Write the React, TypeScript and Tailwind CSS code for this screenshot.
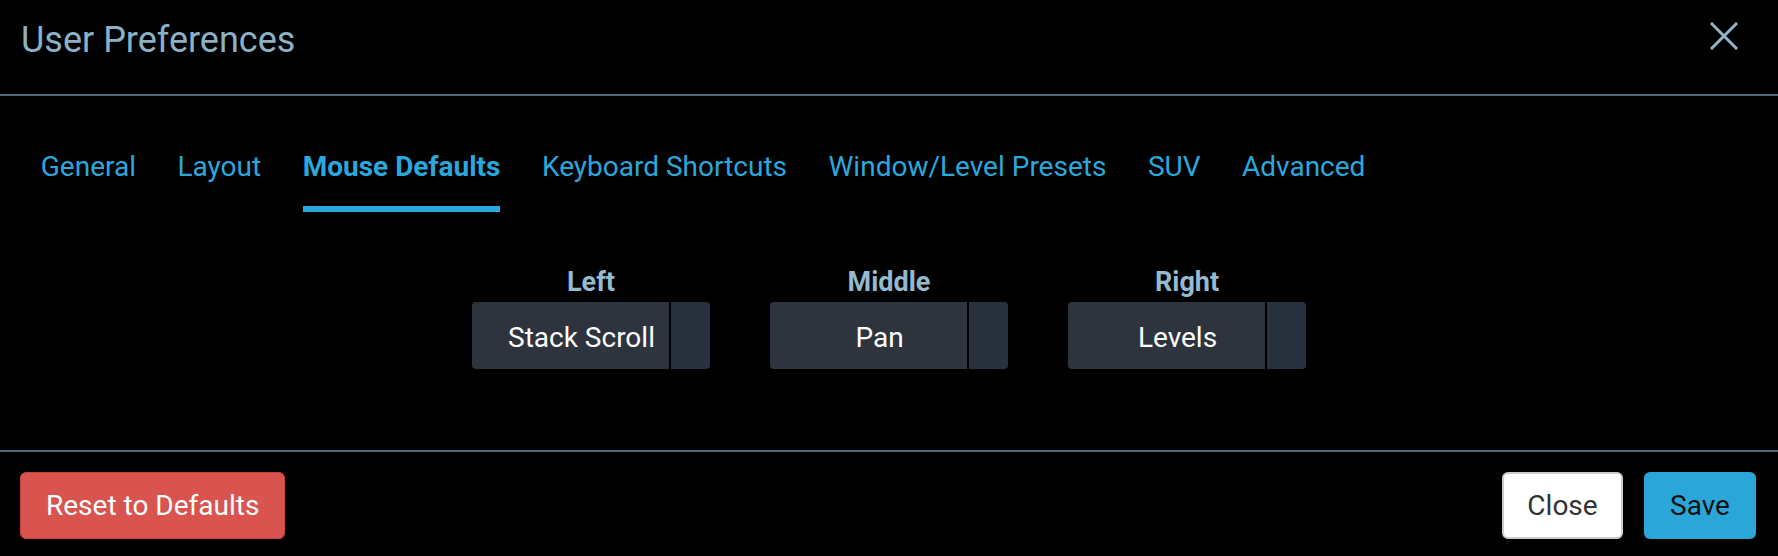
import { useState } from 'react';

const tabs = [
  'General',
  'Layout',
  'Mouse Defaults',
  'Keyboard Shortcuts',
  'Window/Level Presets',
  'SUV',
  'Advanced',
];

const buttons = [
  { label: 'Left', value: 'Stack Scroll' },
  { label: 'Middle', value: 'Pan' },
  { label: 'Right', value: 'Levels' },
];

function MouseSelect({ label, value }: { label: string; value: string }) {
  return (
    <div className="flex flex-col items-center">
      <div className="text-[27px] leading-[30px] font-bold text-[#94bad0]">{label}</div>
      <div className="mt-[5px] flex h-[67px] w-[238px] overflow-hidden rounded-[4px]">
        <div className="flex flex-1 items-center justify-center bg-[#2e343e] pl-[22px] pt-[4px] text-[28px] leading-none text-white">
          {value}
        </div>
        <div className="w-[2px] bg-black" />
        <div className="w-[39px] bg-[#28323e]" />
      </div>
    </div>
  );
}

export default function App() {
  const [active, setActive] = useState('Mouse Defaults');

  return (
    <div className="flex h-[556px] w-full flex-col bg-black font-['Roboto',sans-serif]">
      {/* header */}
      <div className="flex h-[96px] items-start justify-between border-b-2 border-[#4f6878] pl-[21px] pr-[40px] pt-[18px]">
        <h1 className="text-[36px] leading-[44px] font-normal text-[#8bb1c6]">User Preferences</h1>
        <button className="mt-[4px] h-[28px] w-[28px]">
          <svg viewBox="0 0 28 28" width="28" height="28" fill="none" stroke="#8db4c9" strokeWidth="3" strokeLinecap="square">
            <path d="M2 2 L26 26 M26 2 L2 26" />
          </svg>
        </button>
      </div>

      {/* body */}
      <div className="flex flex-1 flex-col">
        <div className="flex px-[20px] pt-[54px]">
          {tabs.map((t) => (
            <button
              key={t}
              onClick={() => setActive(t)}
              className="flex flex-col items-stretch px-[20.75px]"
            >
              <span
                className={`text-[28px] leading-[34px] text-[#2aa8dd] ${
                  active === t ? 'font-bold' : 'font-normal'
                }`}
              >
                {t}
              </span>
              <span
                className={`mt-[22px] h-[6px] ${active === t ? 'bg-[#2aa8dd]' : 'bg-transparent'}`}
              />
            </button>
          ))}
        </div>

        <div className="mt-[55px] flex justify-center gap-[60px]">
          {buttons.map((b) => (
            <MouseSelect key={b.label} label={b.label} value={b.value} />
          ))}
        </div>
      </div>

      {/* footer */}
      <div className="flex h-[106px] items-start justify-between border-t-2 border-[#4f6878] pl-[20px] pr-[22px] pt-[20px]">
        <button className="h-[67px] rounded-[6px] border border-[#c7403c] bg-[#d9534f] px-[25px] text-[28px] text-white">
          Reset to Defaults
        </button>
        <div className="flex gap-[21px]">
          <button className="h-[67px] w-[121px] rounded-[6px] border-2 border-[#cccccc] bg-white text-[28px] text-[#333333]">
            Close
          </button>
          <button className="h-[67px] w-[112px] rounded-[6px] bg-[#2aa6d8] text-[28px] text-[#111111]">
            Save
          </button>
        </div>
      </div>
    </div>
  );
}
